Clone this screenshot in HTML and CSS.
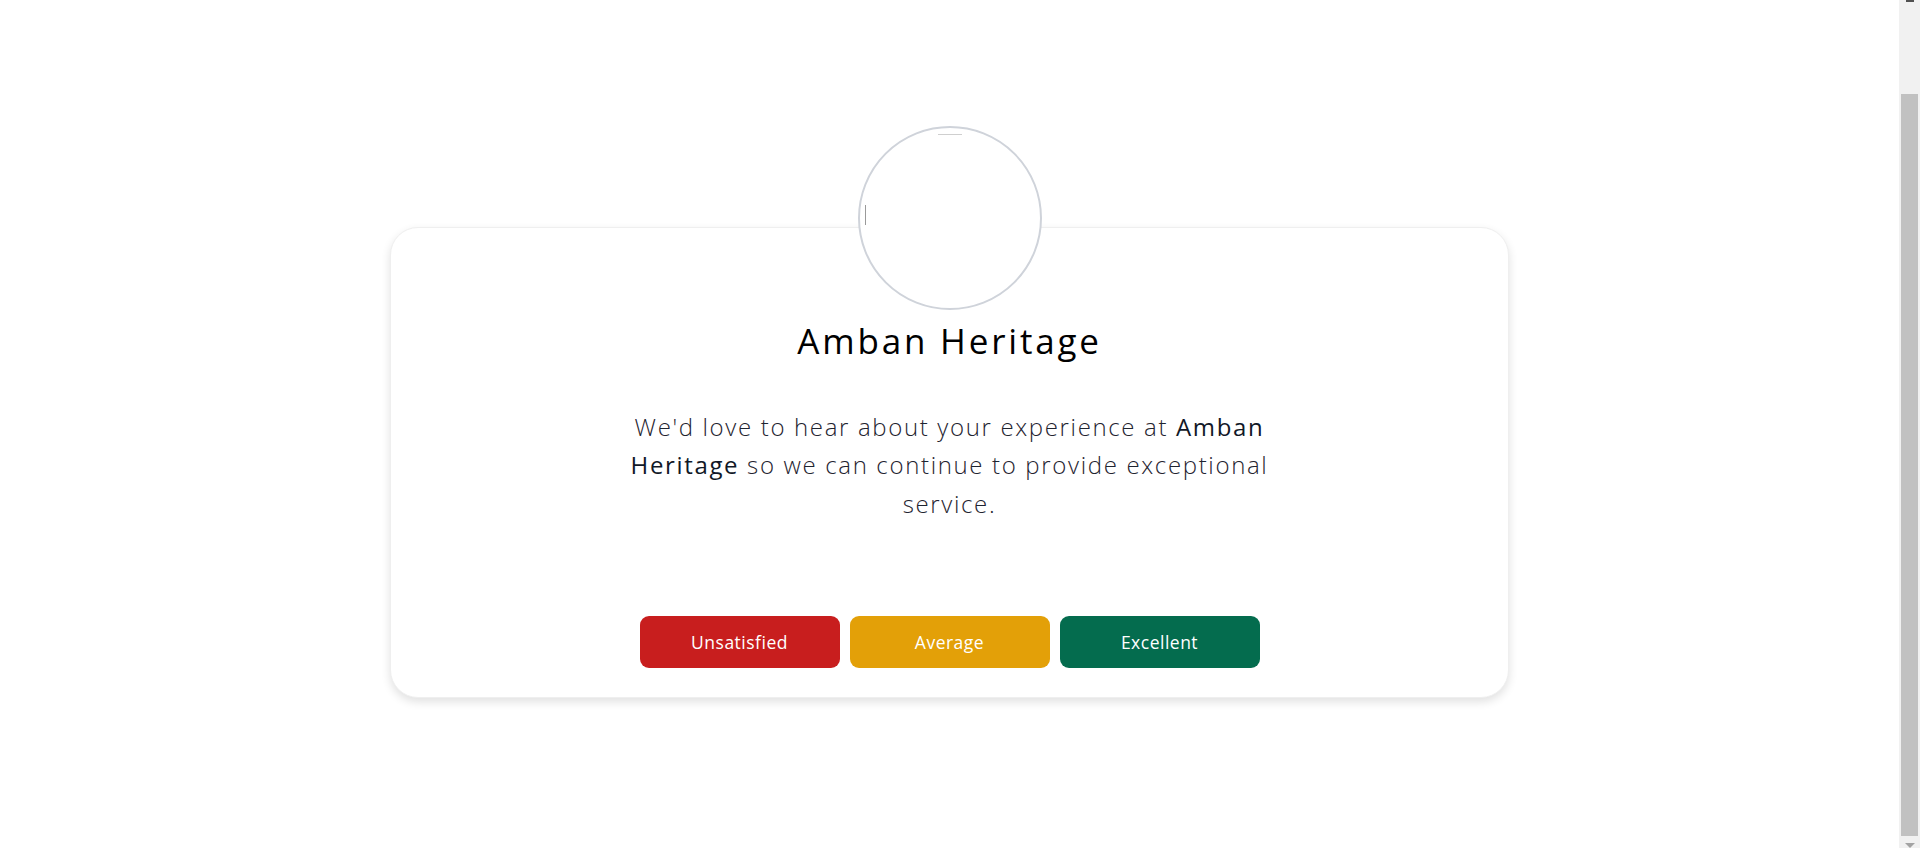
FILE: index.html
```html
<!DOCTYPE html>
<html lang="en">
<head>
<meta charset="utf-8">
<title>Amban Heritage – Feedback</title>
<link rel="stylesheet" href="styles.css">
</head>
<body>
<main class="page">
  <section class="card">
    <div class="avatar" aria-hidden="true">
      <span class="avatar-mark-h"></span>
      <span class="avatar-mark-v"></span>
    </div>
    <h1 class="title">Amban Heritage</h1>
    <p class="lead">We'd love to hear about your experience at <strong>Amban Heritage</strong> so we can continue to provide exceptional service.</p>
    <div class="actions">
      <button class="btn btn-red" type="button">Unsatisfied</button>
      <button class="btn btn-amber" type="button">Average</button>
      <button class="btn btn-green" type="button">Excellent</button>
    </div>
  </section>
</main>
<div class="scrollbar" aria-hidden="true">
  <span class="sb-up"></span>
  <span class="sb-thumb"></span>
  <span class="sb-down"></span>
</div>
</body>
</html>
```

FILE: styles.css
```css
* { box-sizing: border-box; }

html, body {
  margin: 0;
  padding: 0;
  background: #ffffff;
}

body {
  height: 100vh;
  overflow: hidden;
  display: flex;
  font-family: "Open Sans", "Liberation Sans", sans-serif;
  color: #111827;
}

.page {
  flex: 1;
  display: flex;
  justify-content: center;
  align-items: flex-start;
  padding-top: 227px;
}

.card {
  position: relative;
  width: 1119px;
  background: #ffffff;
  border: 1px solid #efefef;
  border-radius: 28px;
  box-shadow: 0 4px 10px rgba(0, 0, 0, 0.12);
  padding: 93px 20px 29px;
  display: flex;
  flex-direction: column;
  align-items: center;
}

.avatar {
  position: absolute;
  top: -102px;
  left: 50%;
  transform: translateX(-50%);
  width: 184px;
  height: 184px;
  border-radius: 50%;
  border: 2px solid #cfd3da;
  background: #ffffff;
}

.avatar-mark-h {
  position: absolute;
  top: 6px;
  left: 78px;
  width: 24px;
  height: 1px;
  background: #cfcfcf;
}

.avatar-mark-v {
  position: absolute;
  top: 77px;
  left: 5px;
  width: 1px;
  height: 20px;
  background: #9a9a9a;
}

.title {
  margin: 0 0 47px;
  font-size: 35px;
  line-height: 40px;
  font-weight: 400;
  letter-spacing: 2.8px;
  color: #000000;
}

.lead {
  margin: 0 0 93px;
  max-width: 700px;
  font-size: 24px;
  line-height: 38.4px;
  font-weight: 300;
  letter-spacing: 1.65px;
  text-align: center;
  color: #1f2430;
}

.lead strong {
  font-weight: 500;
  color: #111827;
}

.actions {
  display: flex;
  gap: 10px;
}

.btn {
  width: 200px;
  height: 52px;
  border: 0;
  border-radius: 9px;
  font-family: "Open Sans", "Liberation Sans", sans-serif;
  font-size: 17.5px;
  font-weight: 400;
  letter-spacing: 0.5px;
  color: #ffffff;
  cursor: pointer;
}

.btn-red { background: #c81e1e; }
.btn-amber { background: #e3a008; }
.btn-green { background: #046c4e; }

/* window scrollbar */
.scrollbar {
  flex: 0 0 21px;
  height: 100%;
  background: #f1f1f1;
  display: flex;
  flex-direction: column;
  align-items: center;
}

.sb-up {
  width: 8px;
  height: 2px;
  background: #505050;
}

.sb-thumb {
  margin-top: 92px;
  width: 17px;
  height: 742px;
  background: #c1c1c1;
}

.sb-down {
  margin-top: 7px;
  width: 0;
  height: 0;
  border-left: 5px solid transparent;
  border-right: 5px solid transparent;
  border-top: 5px solid #a3a3a3;
}
```
